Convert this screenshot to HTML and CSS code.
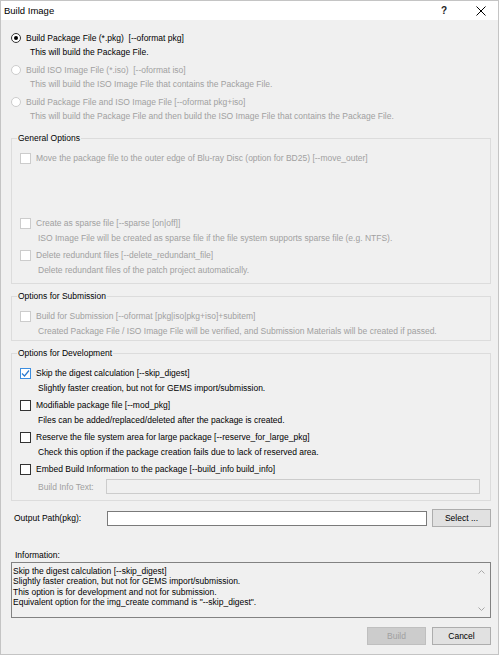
FILE: index.html
```html
<!DOCTYPE html>
<html lang="en">

<head>
    <meta charset="UTF-8">
    <meta name="viewport" content="width=device-width, initial-scale=1.0">
    <title>Build Image</title>
    <link rel="stylesheet" href="styles.css">
</head>

<body>
    <div class="window">
        <div class="titlebar">
            <span class="title">Build Image</span>
            <span class="help">?</span>
            <span class="close">
                <svg width="10" height="10" viewBox="0 0 10 10">
                    <path d="M0.5 0.5 L9.5 9.5 M9.5 0.5 L0.5 9.5" stroke="#000" stroke-width="1" fill="none" />
                </svg>
            </span>
        </div>

        <div class="content">
            <div class="radio-list">
                <div class="radio-item">
                    <div class="row"><span class="radio checked"></span><span>Build Package File (*.pkg)&nbsp; [--oformat pkg]</span></div>
                    <div class="desc">This will build the Package File.</div>
                </div>
                <div class="radio-item disabled">
                    <div class="row"><span class="radio"></span><span>Build ISO Image File (*.iso)&nbsp; [--oformat iso]</span></div>
                    <div class="desc">This will build the ISO Image File that contains the Package File.</div>
                </div>
                <div class="radio-item disabled">
                    <div class="row"><span class="radio"></span><span>Build Package File and ISO Image File [--oformat pkg+iso]</span></div>
                    <div class="desc">This will build the Package File and then build the ISO Image File that contains the Package File.</div>
                </div>
            </div>

            <fieldset class="group group-general">
                <legend>General Options</legend>
                <div class="opt opt-tall disabled">
                    <div class="row"><span class="check"></span><span>Move the package file to the outer edge of Blu-ray Disc (option for BD25) [--move_outer]</span></div>
                </div>
                <div class="opt disabled">
                    <div class="row"><span class="check"></span><span>Create as sparse file [--sparse [on|off]]</span></div>
                    <div class="desc">ISO Image File will be created as sparse file if the file system supports sparse file (e.g. NTFS).</div>
                </div>
                <div class="opt disabled">
                    <div class="row"><span class="check"></span><span>Delete redundunt files [--delete_redundant_file]</span></div>
                    <div class="desc">Delete redundant files of the patch project automatically.</div>
                </div>
            </fieldset>

            <fieldset class="group group-submission">
                <legend>Options for Submission</legend>
                <div class="opt disabled">
                    <div class="row"><span class="check"></span><span>Build for Submission [--oformat [pkg|iso|pkg+iso]+subitem]</span></div>
                    <div class="desc">Created Package File / ISO Image File will be verified, and Submission Materials will be created if passed.</div>
                </div>
            </fieldset>

            <fieldset class="group group-dev">
                <legend>Options for Development</legend>
                <div class="opt">
                    <div class="row">
                        <span class="check checked">
                            <svg width="9" height="9" viewBox="0 0 9 9">
                                <path d="M1 4.5 L3.5 7 L8 1.5" stroke="#2b7bd0" stroke-width="1.2" fill="none" />
                            </svg>
                        </span>
                        <span>Skip the digest calculation [--skip_digest]</span>
                    </div>
                    <div class="desc">Slightly faster creation, but not for GEMS import/submission.</div>
                </div>
                <div class="opt">
                    <div class="row"><span class="check"></span><span>Modifiable package file [--mod_pkg]</span></div>
                    <div class="desc">Files can be added/replaced/deleted after the package is created.</div>
                </div>
                <div class="opt">
                    <div class="row"><span class="check"></span><span>Reserve the file system area for large package [--reserve_for_large_pkg]</span></div>
                    <div class="desc">Check this option if the package creation fails due to lack of reserved area.</div>
                </div>
                <div class="opt">
                    <div class="row"><span class="check"></span><span>Embed Build Information to the package [--build_info build_info]</span></div>
                </div>
                <div class="build-info">
                    <span class="build-info-label">Build Info Text:</span>
                    <span class="textbox disabled-box"></span>
                </div>
            </fieldset>

            <div class="output-row">
                <span class="output-label">Output Path(pkg):</span>
                <span class="textbox"></span>
                <button class="btn">Select ...</button>
            </div>

            <div class="info-label">Information:</div>
            <div class="info-box">
                <div class="info-text">
                    <div>Skip the digest calculation [--skip_digest]</div>
                    <div>Slightly faster creation, but not for GEMS import/submission.</div>
                    <div>This option is for development and not for submission.</div>
                    <div>Equivalent option for the img_create command is "--skip_digest".</div>
                </div>
                <div class="scrollbar">
                    <svg width="7" height="4" viewBox="0 0 7 4">
                        <path d="M0.5 3.5 L3.5 0.5 L6.5 3.5" stroke="#a8a8a8" fill="none" />
                    </svg>
                    <svg width="7" height="4" viewBox="0 0 7 4">
                        <path d="M0.5 0.5 L3.5 3.5 L6.5 0.5" stroke="#a8a8a8" fill="none" />
                    </svg>
                </div>
            </div>

            <div class="button-row">
                <button class="btn btn-disabled">Build</button>
                <button class="btn">Cancel</button>
            </div>
        </div>
    </div>
</body>

</html>
```

FILE: styles.css
```css
* {
    box-sizing: border-box;
}

body {
    margin: 0;
    font-family: "Liberation Sans", Arial, sans-serif;
    font-size: 8.5px;
    color: #000;
}

.window {
    width: 499px;
    height: 655px;
    border: 1px solid #c4c4c4;
    background: #f0f0f0;
    overflow: hidden;
}

.titlebar {
    height: 19px;
    background: #fff;
    display: flex;
    align-items: center;
    padding-left: 3px;
    padding-right: 10px;
}

.title {
    flex: 1;
    font-size: 9.5px;
}

.help {
    width: 14px;
    text-align: center;
    font-size: 10px;
    font-weight: bold;
    color: #222;
    margin-right: 23px;
}

.close {
    width: 14px;
    display: flex;
    justify-content: center;
}

.content {
    padding: 11px 7px 0 10px;
}

/* radio choices */
.radio-list {
    padding-bottom: 5px;
}

.radio-item {
    margin-bottom: 4px;
}

.row {
    display: flex;
    align-items: center;
    height: 14px;
    white-space: nowrap;
}

.radio-item .desc {
    height: 14px;
    line-height: 14px;
    padding-left: 19px;
}

.radio {
    width: 10px;
    height: 10px;
    border: 1px solid #333;
    border-radius: 50%;
    background: #fff;
    margin-right: 5px;
    display: flex;
    align-items: center;
    justify-content: center;
}

.radio.checked::after {
    content: "";
    width: 4px;
    height: 4px;
    border-radius: 50%;
    background: #000;
}

.disabled {
    color: #a0a0a0;
}

.disabled .radio,
.disabled .check {
    border-color: #cccccc;
}

/* group boxes */
.group {
    margin: 6px 0 0 0;
    padding: 6px 0 0 0;
    border: 1px solid #dcdcdc;
    min-width: 0;
}

.group legend {
    margin-left: 5px;
    padding: 0 1px;
    line-height: 12px;
}

.group-general {
    margin-top: 0;
    padding-bottom: 4px;
}

.group-dev {
    padding-bottom: 6px;
}

.opt {
    padding-left: 8px;
    margin-bottom: 2px;
}

.opt .row {
    height: 16px;
}

.opt-tall {
    height: 63px;
}

.opt .desc {
    height: 14px;
    line-height: 14px;
    padding-left: 18px;
    white-space: nowrap;
}

.check {
    width: 11px;
    height: 11px;
    border: 1px solid #333;
    background: #fff;
    margin-right: 5px;
    display: flex;
    align-items: center;
    justify-content: center;
}

.check.checked {
    border-color: #3c8ee0;
}

.build-info {
    display: flex;
    align-items: center;
    height: 15px;
    padding-left: 26px;
    margin-right: 10px;
}

.build-info-label {
    width: 68px;
    color: #a0a0a0;
}

.textbox {
    flex: 1;
    height: 15px;
    background: #fff;
    border: 1px solid #7a7a7a;
}

.textbox.disabled-box {
    background: #f0f0f0;
    border-color: #cccccc;
}

/* output path */
.output-row {
    display: flex;
    align-items: center;
    height: 18px;
    margin-top: 8px;
}

.output-label {
    width: 96px;
    padding-left: 3px;
}

.btn {
    font-family: "Liberation Sans", Arial, sans-serif;
    font-size: 8.5px;
    color: #000;
    width: 59px;
    height: 18px;
    padding: 0;
    background: #e1e1e1;
    border: 1px solid #adadad;
    border-radius: 0;
}

.output-row .btn {
    margin-left: 5px;
}

.btn-disabled {
    background: #cccccc;
    border-color: #bfbfbf;
    color: #a0a0a0;
}

/* information */
.info-label {
    margin-top: 22px;
    height: 12px;
    line-height: 12px;
    padding-left: 4px;
}

.info-box {
    margin-top: 1px;
    height: 56px;
    border: 1px solid #828282;
    display: flex;
}

.info-text {
    flex: 1;
    padding: 3px 0 0 1px;
    line-height: 10.4px;
    white-space: nowrap;
}

.scrollbar {
    width: 17px;
    display: flex;
    flex-direction: column;
    align-items: center;
    justify-content: space-between;
    padding: 7px 0 6px;
}

.button-row {
    display: flex;
    justify-content: flex-end;
    gap: 6px;
    margin-top: 9px;
}
```
